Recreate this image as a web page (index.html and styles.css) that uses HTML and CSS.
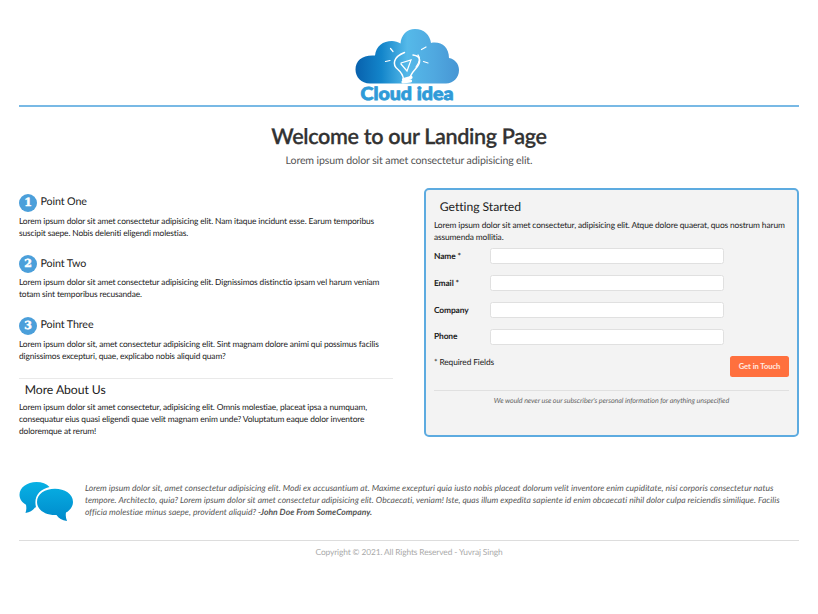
FILE: index.html
```html
<!DOCTYPE html>
<html lang="en">
<head>
<meta charset="utf-8">
<title>Cloud idea</title>
<link rel="stylesheet" href="styles.css">
</head>
<body>
<div class="container">
  <header class="site-header">
    <svg class="logo" viewBox="0 0 120 82" role="img" aria-label="Cloud idea">
      <defs>
        <linearGradient id="cloud" x1="0" x2="1" y1="0" y2="0">
          <stop offset="0" stop-color="#0861ad"/><stop offset=".25" stop-color="#1385ca"/>
          <stop offset=".5" stop-color="#55b9e9"/><stop offset=".75" stop-color="#50a9e0"/><stop offset="1" stop-color="#4796d4"/>
        </linearGradient>
      </defs>
      <path fill="url(#cloud)" d="M22 58.500C13 58.500 7.500 52 7.500 44.500C7.500 35 15 29.500 27 30.500C28 21 35 16 44 16C47 16 50 17 52.500 18.500C53 10 59 4 67 4C76 4 82 10 83 18C93 16 101 22 101 33C107 34 111 39 111 45C111 53 105 58.500 98 58.500Z"/>
      <g fill="none" stroke="#fff" stroke-linecap="round">
        <path stroke-width="1.500" d="M56.500 27.500C45 32 44 40 50 44.500C54 48 55 51 55.500 54M65 30C74 31 73 38 67 44.500C64 47.500 63 50 61.500 53"/>
        <path stroke-width="1.200" d="M70 30C72.500 33 71 38 68 42M53 38L63 35L59 46L53 39"/>
        <path stroke-width="3.200" d="M55.500 54.500L63 52.500M55 57L62.500 56"/>
        <path stroke-width="1.200" d="M42.500 23.500L45 26.500M78 22L73.500 24.500M37.500 36.500L42 35.500M75.500 36.500L80 38"/>
      </g>
      <text class="logo-text" x="12.500" y="74.900" textLength="93" lengthAdjust="spacingAndGlyphs">Cloud idea</text>
    </svg>
  </header>

  <section class="hero">
    <h1>Welcome to our Landing Page</h1>
    <p>Lorem ipsum dolor sit amet consectetur adipisicing elit.</p>
  </section>

  <main class="columns">
    <div class="points">
      <article class="point">
        <h3><span class="num">1</span>Point One</h3>
        <p>Lorem ipsum dolor sit amet consectetur adipisicing elit. Nam itaque incidunt esse. Earum temporibus<br>suscipit saepe. Nobis deleniti eligendi molestias.</p>
      </article>
      <article class="point">
        <h3><span class="num">2</span>Point Two</h3>
        <p>Lorem ipsum dolor sit amet consectetur adipisicing elit. Dignissimos distinctio ipsam vel harum veniam<br>totam sint temporibus recusandae.</p>
      </article>
      <article class="point">
        <h3><span class="num">3</span>Point Three</h3>
        <p>Lorem ipsum dolor sit, amet consectetur adipisicing elit. Sint magnam dolore animi qui possimus facilis<br>dignissimos excepturi, quae, explicabo nobis aliquid quam?</p>
      </article>
      <article class="about">
        <h2>More About Us</h2>
        <p>Lorem ipsum dolor sit amet consectetur, adipisicing elit. Omnis molestiae, placeat ipsa a numquam,<br>consequatur eius quasi eligendi quae velit magnam enim unde? Voluptatum eaque dolor inventore<br>doloremque at rerum!</p>
      </article>
    </div>

    <form class="card">
      <h2>Getting Started</h2>
      <p class="intro">Lorem ipsum dolor sit amet consectetur, adipisicing elit. Atque dolore quaerat, quos nostrum harum<br>assumenda mollitia.</p>
      <div class="field"><label for="name">Name *</label><input id="name" type="text"></div>
      <div class="field"><label for="email">Email *</label><input id="email" type="text"></div>
      <div class="field"><label for="company">Company</label><input id="company" type="text"></div>
      <div class="field"><label for="phone">Phone</label><input id="phone" type="text"></div>
      <div class="actions"><span>* Required Fields</span><button type="button">Get in Touch</button></div>
      <p class="privacy">We would never use our subscriber's personal information for anything unspecified</p>
    </form>
  </main>

  <section class="testimonial">
    <svg class="bubbles" viewBox="0 0 56 42" aria-hidden="true">
      <defs><linearGradient id="bubble" x1="0" x2="0" y1="0" y2="40" gradientUnits="userSpaceOnUse"><stop offset="0" stop-color="#08b2e5"/><stop offset="1" stop-color="#008acb"/></linearGradient></defs>
      <path fill="url(#bubble)" d="M17.500 1C8 1 .5 6.500 .5 13.800C.5 18 3 21.500 7 23.800C7.500 27 7.500 29 6.500 32C11 31 14 29.500 16 26.500L17 26.200C14.500 16 20 8.500 30.500 6C27.500 2.800 23 1 17.500 1Z"/>
      <path fill="url(#bubble)" d="M36 7.800C45.500 7.800 54 13 54 21C54 25.500 51 29.500 47 31.500C46.500 34.500 46.800 37 48 40C43 39 39.500 37.500 37.500 34C26.500 34.500 18 29 18 21C18 13 26 7.800 36 7.800Z"/>
    </svg>
    <blockquote>Lorem ipsum dolor sit, amet consectetur adipisicing elit. Modi ex accusantium at. Maxime excepturi quia iusto nobis placeat dolorum velit inventore enim cupiditate, nisi corporis consectetur natus<br>tempore. Architecto, quia? Lorem ipsum dolor sit amet consectetur adipisicing elit. Obcaecati, veniam! Iste, quas illum expedita sapiente id enim obcaecati nihil dolor culpa reiciendis similique. Facilis<br>officia molestiae minus saepe, provident aliquid? <strong>-John Doe From SomeCompany.</strong></blockquote>
  </section>

  <footer>Copyright © 2021. All Rights Reserved - Yuvraj Singh</footer>
</div>
</body>
</html>
```
FILE: styles.css
```css
* { box-sizing: border-box; }
body {
  margin: 0;
  background: #fff;
  color: #222;
  font: 8.400px/12.2px Lato, "Liberation Sans", sans-serif;
  letter-spacing: -.122px;
  font-variant-ligatures: none;
  text-rendering: geometricPrecision;
}
h1, h2, h3, p, blockquote { margin: 0; font-weight: 400; white-space: nowrap; }
.container { width: 780px; margin: 0 19px; }
.site-header {
  height: 107px;
  padding-top: 25px;
  border-bottom: 2px solid #78b9e5;
  text-align: center;
}
.logo { display: block; width: 120px; height: 82px; margin: 0 auto; position: relative; left: -1.500px; }
.logo-text { font: 900 18px Lato, sans-serif; letter-spacing: 0; fill: #2f9bd8; stroke: #2f9bd8; stroke-width: .8px; }
.hero { height: 81px; padding-top: 16px; text-align: center; }
.hero h1 { color: #333; font-size: 21.600px; line-height: 26px; font-weight: 600; letter-spacing: -.35px; -webkit-text-stroke: .25px #333; }
.hero p { margin-top: 5px; color: #555; font-size: 10.600px; line-height: 14px; letter-spacing: -.13px; }
.columns { display: flex; justify-content: space-between; height: 250px; }
.points { width: 374px; padding-top: 5px; }
.point { height: 61.500px; }
.point h3 { display: flex; align-items: center; height: 19px; font-size: 10.700px; letter-spacing: -.1px; }
.point p { margin-top: 2.600px; }
.num {
  width: 18px; height: 18px; margin-right: 3.500px;
  border-radius: 50%;
  background: #4b9fda; color: #fff;
  font: 900 11px/18px "DejaVu Serif", serif;
  -webkit-text-stroke: .5px #fff;
  text-align: center;
}
.about { border-top: 1px solid #e9e9e9; }
.about h2, .card h2 { padding-left: 5.800px; font-size: 12.200px; line-height: 18px; letter-spacing: -.05px; }
.about h2 { margin-top: 2px; margin-bottom: 2.500px; }
.card {
  width: 375px; height: 249px;
  padding: 8px 8px;
  border: 2px solid #5dabe0;
  border-radius: 5px;
  background: #f3f3f3;
}
.intro { height: 31.500px; padding-top: 2.500px; line-height: 12.500px; }
.field { display: flex; height: 26.800px; margin-bottom: 0; }
.field label { width: 56px; padding-top: 2.500px; font-weight: 700; }
.field input {
  width: 234px; height: 16px; margin-top: .8px; padding: 0 5px;
  border: 1px solid #e0e0e0; border-radius: 2.500px;
  background: #fff; font: inherit;
}
.actions { display: flex; justify-content: space-between; height: 36px; padding-top: 1px; border-bottom: 1px solid #e0e0e0; }
.actions button {
  width: 59px; height: 21.500px; padding: 0;
  border: 0; border-radius: 2.500px;
  background: #ff703e; color: #ffeae2;
  font: 700 7.600px Lato, sans-serif;
  letter-spacing: -.05px;
}
.privacy { margin-top: 4px; color: #666; font-size: 7.100px; font-style: italic; text-align: center; letter-spacing: -.07px; }
.testimonial { display: flex; height: 103px; padding-top: 44px; border-bottom: 1px solid #ddd; }
.bubbles { width: 56px; height: 42px; margin-top: -1px; margin-right: 10px; flex: none; }
blockquote { color: #555; font-size: 8.540px; font-style: italic; letter-spacing: .016px; }
footer { margin-top: 5px; color: #aaa; text-align: center; letter-spacing: -.122px; }
```
